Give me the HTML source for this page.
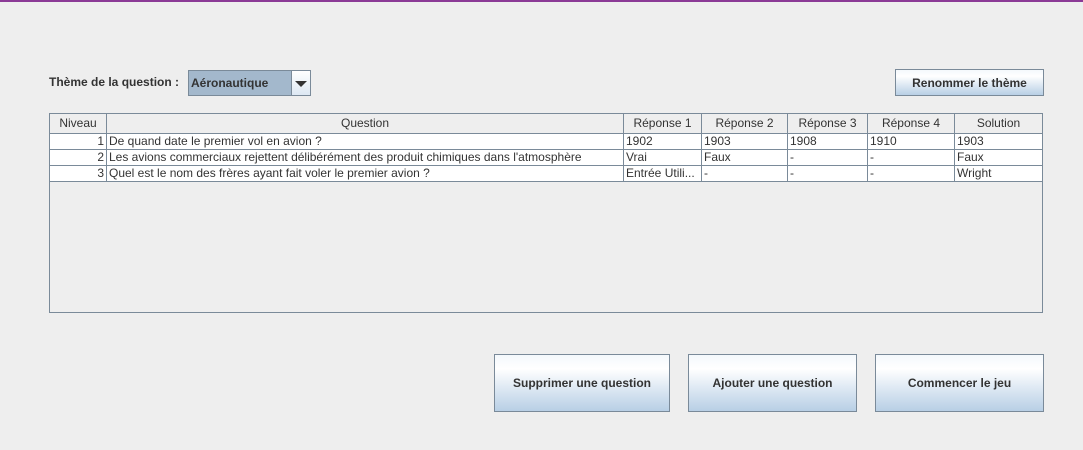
<!DOCTYPE html>
<html><head><style>
body{margin:0;width:1083px;height:450px;background:#eeeeee;position:relative;overflow:hidden;font-family:"Liberation Sans",Arial,sans-serif;font-size:12px;color:#333}
.a{position:absolute}
.btn{position:absolute;border:1px solid #7a8a99;background:linear-gradient(#f4f8fc 0%,#ffffff 25%,#dde8f3 60%,#b8cfe5 100%);font-weight:bold;color:#333;display:flex;align-items:center;justify-content:center;box-sizing:border-box}
table{border-collapse:collapse;table-layout:fixed}
td,th{height:15px;padding:0 2px;border:1px solid #7a8a99;white-space:nowrap;overflow:hidden;font-weight:normal;font-size:12px;line-height:15px;color:#333}
th{background:#eeeeee;height:19px;border-top:none}
td{background:#fff}
</style></head><body>
<div class="a" style="left:0;top:0;width:1083px;height:2px;background:#8b3a96"></div>
<div class="a" style="left:49px;top:75px;font-weight:bold">Thème de la question :</div>
<div class="a" style="left:188px;top:70px;width:121px;height:24px;border:1px solid #7a8a99;background:#a3b8cc;box-sizing:content-box;overflow:hidden">
 <div class="a" style="left:2px;top:5px;font-weight:bold;color:#333">Aéronautique</div>
 <div class="a" style="left:102px;top:0;width:19px;height:24px;border-left:1px solid #7a8a99;background:linear-gradient(#fff,#dde8f3);box-sizing:border-box"></div>
 <div class="a" style="left:106px;top:10px;width:0;height:0;border-left:6px solid transparent;border-right:6px solid transparent;border-top:6px solid #333"></div>
</div>
<div class="btn" style="left:895px;top:69px;width:149px;height:27px">Renommer le thème</div>
<div class="a" style="left:49px;top:113px;width:992px;height:198px;border:1px solid #7a8a99;background:#eeeeee">
<table style="width:992px;margin-left:-1px">
<colgroup><col style="width:57px"><col style="width:517px"><col style="width:78px"><col style="width:86px"><col style="width:80px"><col style="width:87px"><col style="width:88px"></colgroup>
<tr><th>Niveau</th><th>Question</th><th>Réponse 1</th><th>Réponse 2</th><th>Réponse 3</th><th>Réponse 4</th><th>Solution</th></tr>
<tr><td style="text-align:right">1</td><td>De quand date le premier vol en avion ?</td><td>1902</td><td>1903</td><td>1908</td><td>1910</td><td>1903</td></tr>
<tr><td style="text-align:right">2</td><td>Les avions commerciaux rejettent délibérément des produit chimiques dans l'atmosphère</td><td>Vrai</td><td>Faux</td><td>-</td><td>-</td><td>Faux</td></tr>
<tr><td style="text-align:right">3</td><td>Quel est le nom des frères ayant fait voler le premier avion ?</td><td>Entrée Utili...</td><td>-</td><td>-</td><td>-</td><td>Wright</td></tr>
</table></div>
<div class="btn" style="left:494px;top:354px;width:176px;height:58px">Supprimer une question</div>
<div class="btn" style="left:688px;top:354px;width:169px;height:58px">Ajouter une question</div>
<div class="btn" style="left:875px;top:354px;width:169px;height:58px">Commencer le jeu</div>
</body></html>
